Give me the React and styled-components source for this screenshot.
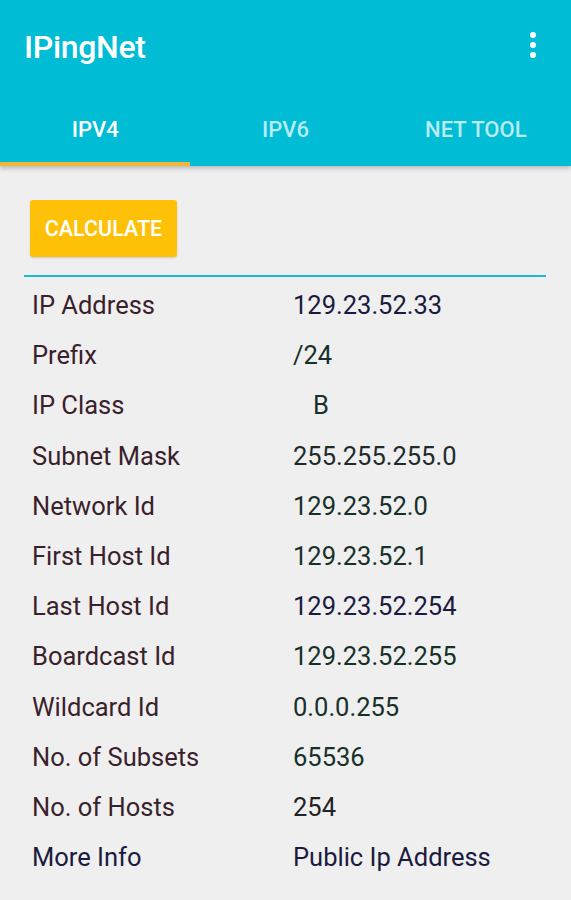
import styled, { createGlobalStyle } from 'styled-components';

const GlobalStyle = createGlobalStyle`
  body {
    margin: 0;
    background: #efefef;
    font-family: 'Roboto', 'Liberation Sans', sans-serif;
  }
`;

const Page = styled.div`
  width: 571px;
  min-height: 900px;
  background: #efefef;
`;

const Header = styled.header`
  background: #00bcd4;
  box-shadow: 0 2px 5px rgba(0, 0, 0, 0.25);
  position: relative;
  z-index: 1;
`;

const AppBar = styled.div`
  height: 94px;
  display: flex;
  align-items: center;
  justify-content: space-between;
  padding: 0 24px;
`;

const Title = styled.h1`
  margin: 0;
  font-size: 32px;
  font-weight: 500;
  color: #fff;
  letter-spacing: -0.3px;
`;

const MenuButton = styled.div`
  display: flex;
  flex-direction: column;
  gap: 4px;
  margin-right: 11px;
  margin-top: -4px;
`;

const Dot = styled.span`
  width: 6px;
  height: 6px;
  border-radius: 50%;
  background: #fff;
`;

const Tabs = styled.nav`
  display: grid;
  grid-template-columns: repeat(3, 1fr);
  height: 72px;
`;

const Tab = styled.div`
  display: flex;
  align-items: center;
  justify-content: center;
  font-size: 22px;
  font-weight: 500;
  color: ${(p) => (p.$active ? '#fff' : 'rgba(255,255,255,0.72)')};
  border-bottom: 4px solid ${(p) => (p.$active ? '#f4b63a' : 'transparent')};
  padding-top: 3px;
`;

const Content = styled.main`
  padding: 34px 25px 0 24px;
`;

const CalcButton = styled.button`
  margin-left: 6px;
  width: 147px;
  height: 57px;
  padding: 0;
  border: none;
  border-radius: 3px;
  background: #ffc107;
  color: #fff;
  font-family: inherit;
  font-size: 21.5px;
  font-weight: 500;
  box-shadow: 0 1px 2px rgba(0, 0, 0, 0.15);
`;

const Divider = styled.div`
  height: 2px;
  background: #1cb8d0;
  margin-top: 18px;
`;

const Table = styled.div`
  display: flex;
  flex-direction: column;
  padding-top: 3px;
`;

const Row = styled.div`
  display: flex;
  align-items: center;
  height: 50.2px;
  padding-left: 8px;
  font-size: 25.5px;
`;

const Label = styled.span`
  width: 261px;
  color: ${(p) => p.$color || '#3a1f2c'};
`;

const Value = styled.span`
  color: ${(p) => p.$color || '#1f2b2b'};
  padding-left: ${(p) => p.$indent || 0}px;
`;

const rows = [
  { label: 'IP Address', value: '129.23.52.33', valueColor: '#1b1b3f' },
  { label: 'Prefix', value: '/24', valueColor: '#17302a' },
  { label: 'IP Class', value: 'B', valueColor: '#17302a', indent: 20 },
  { label: 'Subnet Mask', value: '255.255.255.0' },
  { label: 'Network Id', value: '129.23.52.0', valueColor: '#17302a' },
  { label: 'First Host Id', value: '129.23.52.1', valueColor: '#17302a' },
  { label: 'Last Host Id', value: '129.23.52.254', valueColor: '#1b1b3f' },
  { label: 'Boardcast Id', value: '129.23.52.255', valueColor: '#17302a' },
  { label: 'Wildcard Id', value: '0.0.0.255', valueColor: '#17302a' },
  { label: 'No. of Subsets', value: '65536', valueColor: '#17302a' },
  { label: 'No. of Hosts', value: '254', valueColor: '#222' },
  { label: 'More Info', value: 'Public Ip Address', labelColor: '#1b1b3f', valueColor: '#1b1b3f' },
];

export default function App() {
  return (
    <Page>
      <GlobalStyle />
      <Header>
        <AppBar>
          <Title>IPingNet</Title>
          <MenuButton>
            <Dot />
            <Dot />
            <Dot />
          </MenuButton>
        </AppBar>
        <Tabs>
          <Tab $active>IPV4</Tab>
          <Tab>IPV6</Tab>
          <Tab>NET TOOL</Tab>
        </Tabs>
      </Header>
      <Content>
        <CalcButton>CALCULATE</CalcButton>
        <Divider />
        <Table>
          {rows.map((r) => (
            <Row key={r.label}>
              <Label $color={r.labelColor}>{r.label}</Label>
              <Value $color={r.valueColor} $indent={r.indent}>
                {r.value}
              </Value>
            </Row>
          ))}
        </Table>
      </Content>
    </Page>
  );
}
